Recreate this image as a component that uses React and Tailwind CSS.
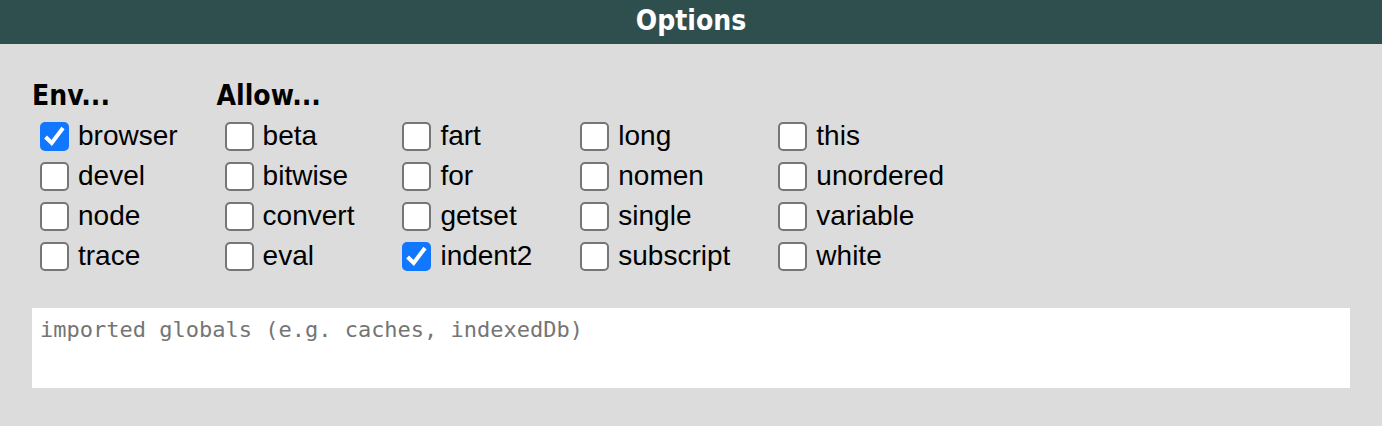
const groups = [
  { title: 'Env...', columns: [['browser', 'devel', 'node', 'trace']] },
  {
    title: 'Allow...',
    columns: [
      ['beta', 'bitwise', 'convert', 'eval'],
      ['fart', 'for', 'getset', 'indent2'],
      ['long', 'nomen', 'single', 'subscript'],
      ['this', 'unordered', 'variable', 'white'],
    ],
  },
];

const enabled = ['browser', 'indent2'];

const headingFont = "font-['DejaVu_Sans_Condensed','DejaVu_Sans',sans-serif] text-[28px] font-bold";

function Option({ name }) {
  return (
    <label className="flex h-10 items-center gap-[9px]">
      <span className="grid shrink-0 place-items-center">
        <input
          type="checkbox"
          name={name}
          defaultChecked={enabled.includes(name)}
          className="peer col-start-1 row-start-1 size-[29px] appearance-none rounded-[5px] border-2 border-[#767676] bg-white checked:border-[#1177ff] checked:bg-[#1177ff]"
        />
        <svg
          viewBox="0 0 29 29"
          fill="none"
          stroke="white"
          strokeWidth="4"
          aria-hidden="true"
          className="pointer-events-none invisible col-start-1 row-start-1 size-[29px] peer-checked:visible"
        >
          <path d="M5.6 15 L11.7 21 L23 6" />
        </svg>
      </span>
      <span>{name}</span>
    </label>
  );
}

function Group({ title, columns }) {
  return (
    <fieldset>
      <legend className={`${headingFont} leading-10`}>{title}</legend>
      <div className="flex gap-12 pl-2">
        {columns.map((names) => (
          <div key={names[0]}>
            {names.map((name) => (
              <Option key={name} name={name} />
            ))}
          </div>
        ))}
      </div>
    </fieldset>
  );
}

export default function App() {
  return (
    <main className="min-h-screen bg-[#dcdcdc] font-['Liberation_Sans',Arial,sans-serif] text-[28px] leading-10 text-black">
      <h1 className={`${headingFont} bg-[#2f4f4f] pt-px pb-[3px] text-center leading-10 text-white`}>Options</h1>
      <form className="px-8 pt-8 pb-9">
        <div className="flex flex-wrap gap-[39px]">
          {groups.map((group) => (
            <Group key={group.title} {...group} />
          ))}
        </div>
        <textarea
          aria-label="Imported globals"
          placeholder="imported globals (e.g. caches, indexedDb)"
          className="mt-8 block h-20 w-full resize-none bg-white px-2 py-2 font-['DejaVu_Sans_Mono',monospace] text-[22px] leading-7 placeholder:text-[#757575]"
        />
      </form>
    </main>
  );
}
